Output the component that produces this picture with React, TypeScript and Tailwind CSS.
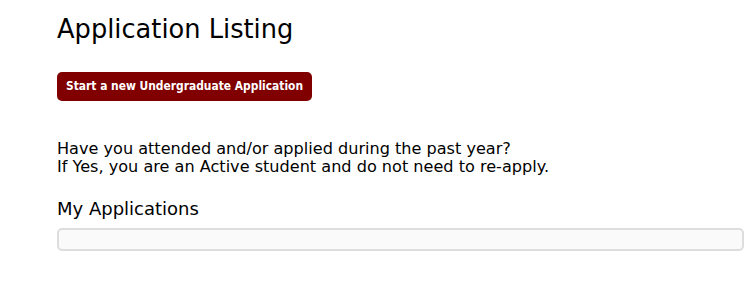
export default function App() {
  return (
    <div className="min-h-[305px] bg-white pl-[57px] pr-[8px] pt-[11px] text-black" style={{ fontFamily: '"DejaVu Sans", Verdana, sans-serif' }}>
      <h1 className="text-[25.7px] font-normal leading-[36px]">Application Listing</h1>
      <div className="mt-[25px]">
        <button
          className="h-[29px] rounded-[5px] bg-[#800000] px-[9px] text-[11.9px] font-bold text-white"
          style={{ fontFamily: '"DejaVu Sans Condensed", "DejaVu Sans", sans-serif' }}
        >
          Start a new Undergraduate Application
        </button>
      </div>
      <p className="mt-[39px] text-[16.1px] leading-[18px]">
        Have you attended and/or applied during the past year?
        <br />
        If Yes, you are an Active student and do not need to re-apply.
      </p>
      <h2 className="mt-[22px] text-[18px] font-normal leading-[22px]">My Applications</h2>
      <div className="mt-[8px] h-[23px] rounded-[5px] border-2 border-[#dddddd] bg-[#fafafa]" />
    </div>
  );
}
